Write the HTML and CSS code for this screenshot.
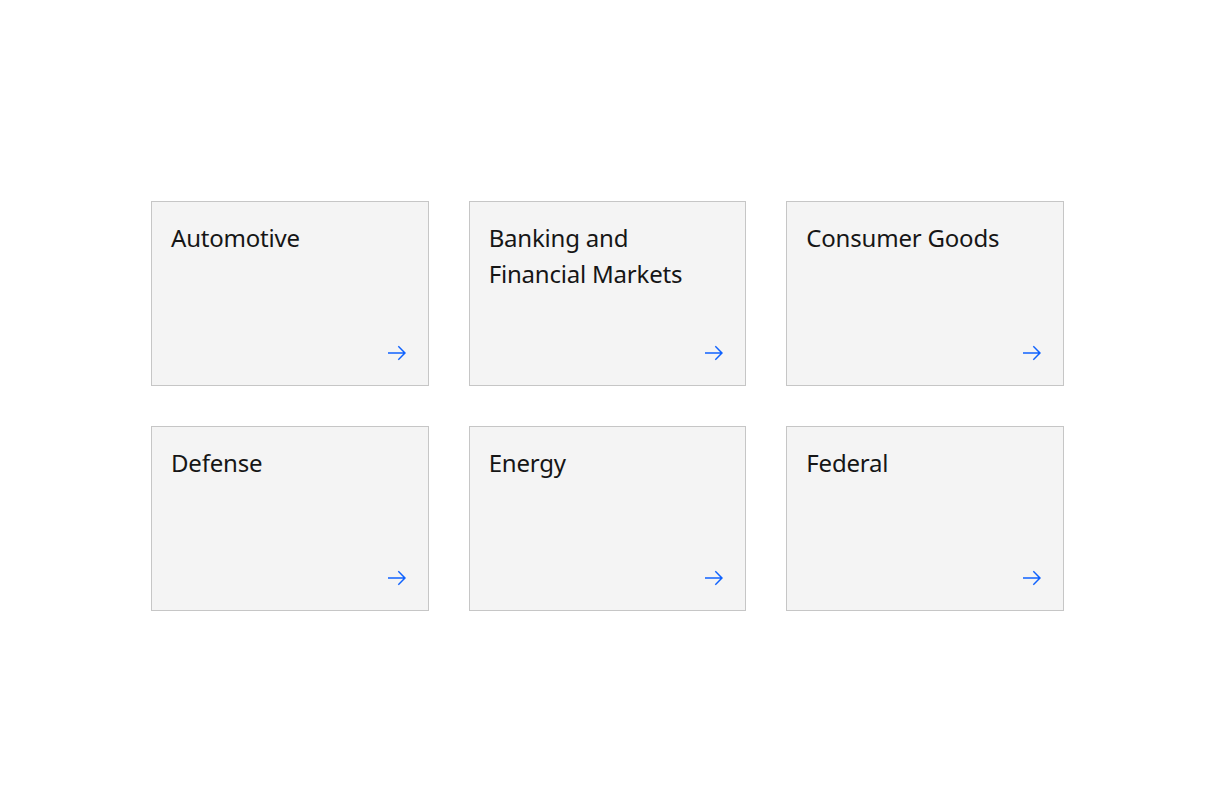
FILE: index.html
```html
<!DOCTYPE html>
<html lang="en">
<head>
<meta charset="utf-8">
<link rel="stylesheet" href="styles.css">
</head>
<body>
<main class="page">
  <div class="grid">
    <a class="card" href="#"><span class="title">Automotive</span><svg class="arrow" viewBox="0 0 20 20" width="20" height="20"><path d="M11.8 2.8L10.8 3.8 16.2 9.3 1 9.3 1 10.7 16.2 10.7 10.8 16.2 11.8 17.2 19 10z"/></svg></a>
    <a class="card" href="#"><span class="title">Banking and Financial Markets</span><svg class="arrow" viewBox="0 0 20 20" width="20" height="20"><path d="M11.8 2.8L10.8 3.8 16.2 9.3 1 9.3 1 10.7 16.2 10.7 10.8 16.2 11.8 17.2 19 10z"/></svg></a>
    <a class="card" href="#"><span class="title">Consumer Goods</span><svg class="arrow" viewBox="0 0 20 20" width="20" height="20"><path d="M11.8 2.8L10.8 3.8 16.2 9.3 1 9.3 1 10.7 16.2 10.7 10.8 16.2 11.8 17.2 19 10z"/></svg></a>
    <a class="card" href="#"><span class="title">Defense</span><svg class="arrow" viewBox="0 0 20 20" width="20" height="20"><path d="M11.8 2.8L10.8 3.8 16.2 9.3 1 9.3 1 10.7 16.2 10.7 10.8 16.2 11.8 17.2 19 10z"/></svg></a>
    <a class="card" href="#"><span class="title">Energy</span><svg class="arrow" viewBox="0 0 20 20" width="20" height="20"><path d="M11.8 2.8L10.8 3.8 16.2 9.3 1 9.3 1 10.7 16.2 10.7 10.8 16.2 11.8 17.2 19 10z"/></svg></a>
    <a class="card" href="#"><span class="title">Federal</span><svg class="arrow" viewBox="0 0 20 20" width="20" height="20"><path d="M11.8 2.8L10.8 3.8 16.2 9.3 1 9.3 1 10.7 16.2 10.7 10.8 16.2 11.8 17.2 19 10z"/></svg></a>
  </div>
</main>
</body>
</html>
```
FILE: styles.css
```css
html, body {
  margin: 0;
  padding: 0;
  background: #ffffff;
}
body {
  font-family: "Noto Sans", "Open Sans", sans-serif;
  color: #161616;
}
.page {
  padding: 201px 152px 0 151px;
}
.grid {
  display: grid;
  grid-template-columns: repeat(3, 1fr);
  column-gap: 40px;
  row-gap: 40px;
  width: 913px;
}
.card {
  display: flex;
  flex-direction: column;
  justify-content: space-between;
  height: 185px;
  box-sizing: border-box;
  padding: 18px 21px 22px 19px;
  background: #f4f4f4;
  border: 1px solid #c6c6c6;
  text-decoration: none;
  color: #161616;
}
.title {
  font-size: 24px;
  line-height: 36px;
  font-weight: 400;
  letter-spacing: -0.2px;
}
.arrow {
  align-self: flex-end;
  fill: #0f62fe;
  display: block;
}
```
